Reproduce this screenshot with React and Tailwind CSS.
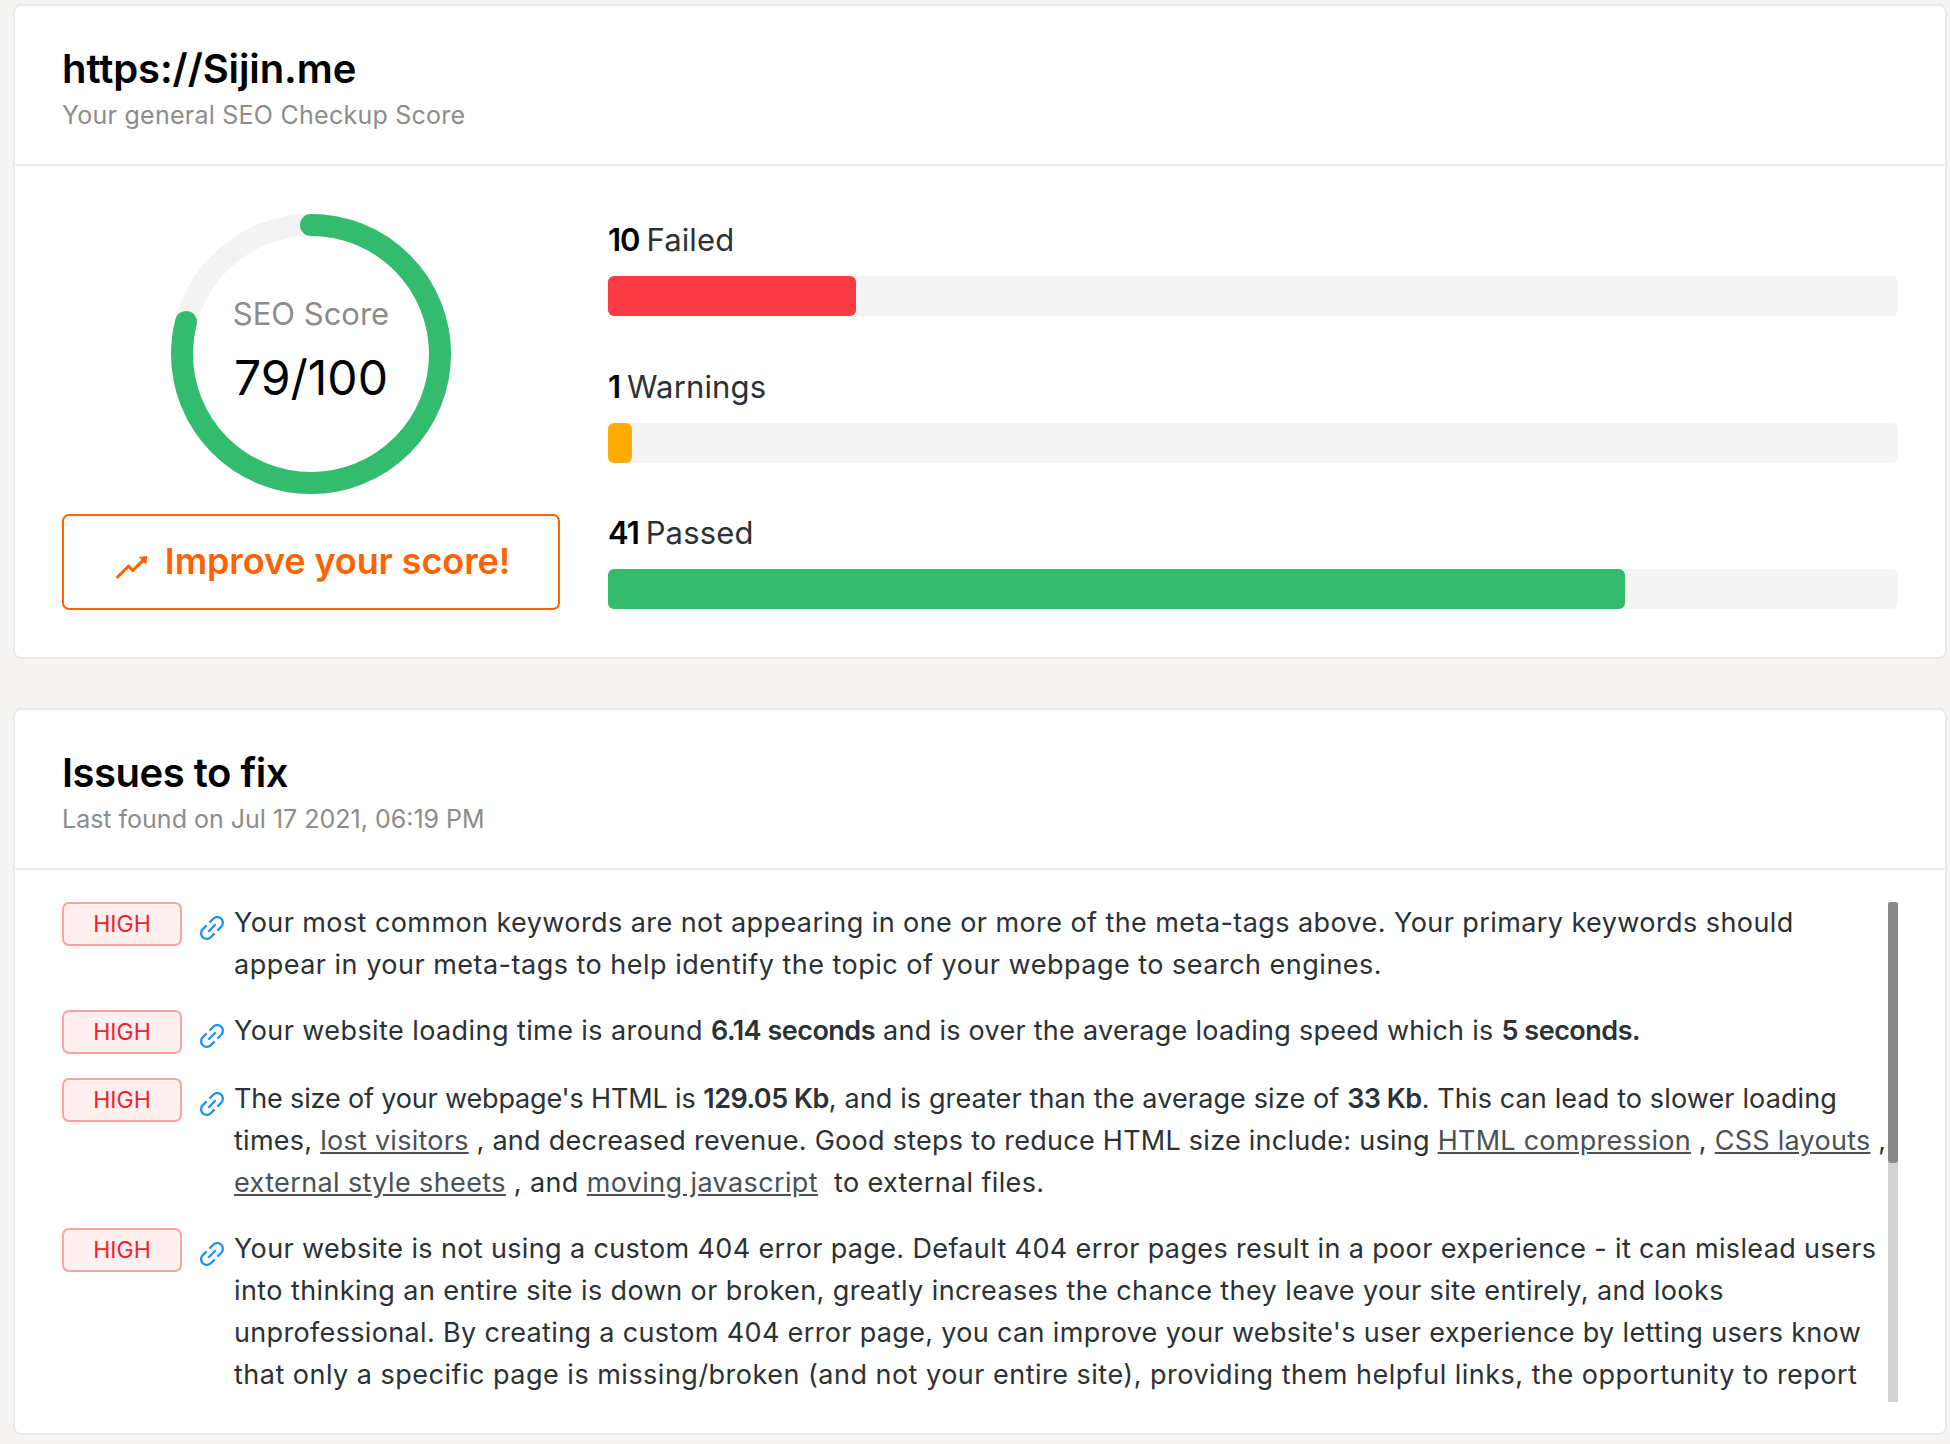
import React from 'react';
import { AiOutlineLink, AiOutlineRise } from 'react-icons/ai';

const bars = [
  { count: '10', label: 'Failed', width: 'w-[19.2%]', color: 'bg-[#fa3a45]' },
  { count: '1', label: 'Warnings', width: 'w-[24px]', color: 'bg-[#ffab00]' },
  { count: '41', label: 'Passed', width: 'w-[78.8%]', color: 'bg-[#34bc6e]' },
];

const CardHeader = ({ title, titleClass, subtitle, subClass }) => (
  <div className="h-[160px] border-b-2 border-[#e9ebeb] pl-[47px] pt-[40px]">
    <h2 className={`text-[40px] leading-[46px] font-semibold text-black ${titleClass}`}>{title}</h2>
    <p className={`mt-[8px] text-[25px] leading-[30px] text-[#8c8c8c] ${subClass}`}>{subtitle}</p>
  </div>
);

const ScoreRing = () => (
  <div className="relative mx-auto h-[280px] w-[280px]">
    <svg width="280" height="280" viewBox="0 0 280 280">
      <circle cx="140" cy="140" r="129" fill="none" stroke="#f3f3f3" strokeWidth="22" />
      <circle
        cx="140"
        cy="140"
        r="129"
        fill="none"
        stroke="#34bc6e"
        strokeWidth="22"
        strokeLinecap="round"
        strokeDasharray="640 811"
        transform="rotate(-90 140 140)"
      />
    </svg>
    <div className="absolute inset-0 flex flex-col items-center pt-[80px]">
      <span className="text-[31px] leading-[40px] text-[#8c8c8c]">SEO Score</span>
      <span className="mt-[14px] text-[48px] leading-[60px] text-black">79/100</span>
    </div>
  </div>
);

const Issue = ({ className, children }) => (
  <div className={`flex ${className}`}>
    <span className="flex h-[44px] w-[120px] shrink-0 items-center justify-center rounded-[7px] border-2 border-[#ffa39e] bg-[#fff1f0] text-[23px] text-[#f5222d]">
      HIGH
    </span>
    <AiOutlineLink className="ml-[14px] mr-[6px] mt-[10px] shrink-0 text-[#1890ff]" size={32} />
    <div className="whitespace-nowrap text-[27px] leading-[42px] text-[#2b3134]">{children}</div>
  </div>
);

const A = ({ children }) => <a href="#" className="text-[#4a5053] underline">{children}</a>;
const B = ({ children }) => <b className="font-semibold tracking-[-0.5px]">{children}</b>;

export default function App() {
  return (
    <div className="min-h-[1444px] bg-[#f6f5f3] pl-[13px] pr-[3px] pt-[4px] font-['Inter',sans-serif]">
      <section className="h-[655px] rounded-[8px] border-2 border-[#e9ebeb] bg-white">
        <CardHeader title="https://Sijin.me" titleClass="tracking-[-0.1px]" subtitle="Your general SEO Checkup Score" subClass="tracking-[0.25px]" />
        <div className="flex pl-[47px] pr-[47px] pt-[48px]">
          <div className="w-[498px] shrink-0">
            <ScoreRing />
            <button
              type="button"
              className="mt-[20px] flex h-[96px] w-full items-center justify-center gap-[14px] rounded-[7px] border-2 border-[#ff6200] pb-[2px] text-[36px] font-semibold tracking-[-0.1px] text-[#ff6200]"
            >
              <AiOutlineRise className="mt-[12px]" size={39} />
              Improve your score!
            </button>
          </div>
          <div className="ml-[48px] flex-1 pt-[6px]">
            {bars.map((bar) => (
              <div key={bar.label} className="mb-[50.5px] last:mb-0">
                <div className="h-[40px] pt-[1px] text-[31px] leading-[38px] tracking-[0.15px] text-[#2b3134]">
                  <b className="-mr-[2px] font-semibold tracking-[-1px] text-black">{bar.count}</b> {bar.label}
                </div>
                <div className="mt-[16px] h-[40px] rounded-[6px] bg-[#f5f5f5]">
                  <div className={`h-full rounded-[6px] ${bar.width} ${bar.color}`} />
                </div>
              </div>
            ))}
          </div>
        </div>
      </section>

      <section className="mt-[49px] h-[727px] rounded-[8px] border-2 border-[#e9ebeb] bg-white">
        <CardHeader title="Issues to fix" titleClass="tracking-[-0.5px]" subtitle="Last found on Jul 17 2021, 06:19 PM" />
        <div className="ml-[47px] mr-[47px] mt-[32px] flex h-[500px]">
          <div className="min-w-0 flex-1 overflow-hidden">
            <Issue className="mb-[24px]">
              <div className="tracking-[0.42px]">Your most common keywords are not appearing in one or more of the meta-tags above. Your primary keywords should</div>
              <div className="tracking-[0.49px]">appear in your meta-tags to help identify the topic of your webpage to search engines.</div>
            </Issue>
            <Issue className="mb-[24px]">
              <div className="tracking-[0.42px]">
                Your website loading time is around <B>6.14 seconds</B> <span className="tracking-[0.27px]">and is over the average loading speed which is</span> <B>5 seconds.</B>
              </div>
            </Issue>
            <Issue className="mb-[24px]">
              <div className="tracking-[0.13px]">
                <span className="tracking-[-0.16px]">The size of your webpage's HTML is</span> <B>129.05 Kb</B>, and is greater than the average size of <B>33 Kb</B>. This can lead to slower loading
              </div>
              <div className="tracking-[0.26px]">
                times, <A>lost visitors</A> , and decreased revenue. Good steps to reduce HTML size include: using <A>HTML compression</A> , <A>CSS layouts</A> ,
              </div>
              <div className="tracking-[0.38px]">
                <A>external style sheets</A> , and <A>moving javascript</A>&nbsp; to external files.
              </div>
            </Issue>
            <Issue>
              <div className="tracking-[0.36px]">Your website is not using a custom 404 error page. Default 404 error pages result in a poor experience - it can mislead users</div>
              <div className="tracking-[0.41px]">into thinking an entire site is down or broken, greatly increases the chance they leave your site entirely, and looks</div>
              <div className="tracking-[0.34px]">unprofessional. By creating a custom 404 error page, you can improve your website's user experience by letting users know</div>
              <div className="tracking-[0.49px]">that only a specific page is missing/broken (and not your entire site), providing them helpful links, the opportunity to report</div>
            </Issue>
          </div>
          <div className="h-full w-[10px] shrink-0 bg-[#d2d2d2]">
            <div className="h-[261px] rounded-[3px] bg-[#888888]" />
          </div>
        </div>
      </section>
    </div>
  );
}
